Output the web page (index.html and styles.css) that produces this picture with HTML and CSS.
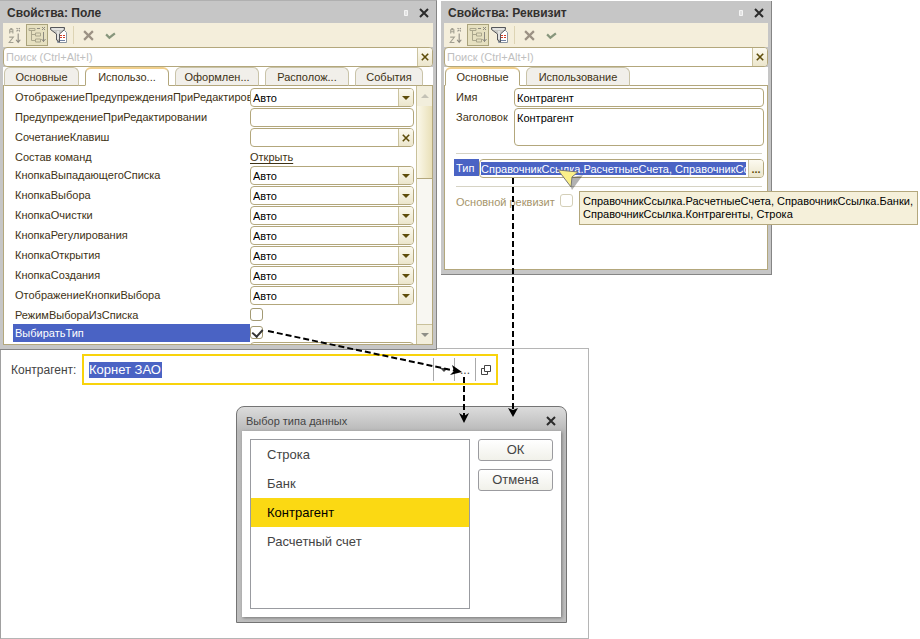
FILE: index.html
```
<!DOCTYPE html>
<html lang="ru">
<head>
    <meta charset="UTF-8">
    <meta name="viewport" content="width=device-width, initial-scale=1.0">
    <title>Выбор типа данных</title>
    <link rel="stylesheet" href="styles.css">
</head>
<body>

    <!-- Shared icons -->
    <svg class="icons" width="0" height="0" aria-hidden="true">
        <symbol id="sort" viewBox="0 0 17 17">
            <path d="M3.500 7V3.500h1v-1h1v1h1V7M3.500 5.500h3M3 10.500h4L3 15.500h4" fill="none" stroke="#a3a092"/>
            <path d="M11.500 7v8M9.500 13l2 2.500 2-2.500M10 2l1 1M13 2l-1 1M10 5l1-1M13 5l-1-1" fill="none" stroke="#8d8a80"/>
        </symbol>
        <symbol id="tree" viewBox="0 0 18 18">
            <path d="M1 2.500h6v2H1zM3.500 4.500v10M3.500 8.500h4M3.500 14.500h4M7.500 7h5v3h-5zM7.500 13h5v3h-5z" fill="none" stroke="#aaa68c"/>
            <path d="M15.500 6v10M13.500 13l2 2.500 2-2.500M9 2.500h3M14 1l3 3M17 1l-3 3" fill="none" stroke="#8d8a80"/>
        </symbol>
        <symbol id="filter" viewBox="0 0 18 18">
            <path d="M7.500 4.500h7l2 2v10h-9z" fill="#fff" stroke="#8a94a0"/>
            <path d="M10 9.500h2M13 9.500h2M10 11.500h2M13 11.500h2" stroke="#d04028"/>
            <path d="M10 14.500h5" stroke="#7080a0"/>
            <path d="M0.500 1.500h14v2L9.500 8v8l-3-2V8L0.500 3.500z" fill="#c8c8c4" stroke="#55565a"/>
            <path d="M2 3h11M8 5v8" stroke="#fff"/>
        </symbol>
        <symbol id="cross" viewBox="0 0 10 10">
            <path d="M1 1l8 8M9 1L1 9" fill="none" stroke="currentColor" stroke-width="2"/>
        </symbol>
        <symbol id="tick" viewBox="0 0 10 10">
            <path d="M1 4l3 3 5-4" fill="none" stroke="currentColor" stroke-width="2"/>
        </symbol>
        <symbol id="down" viewBox="0 0 8 4">
            <path d="M0 0h8L4 4z" fill="currentColor"/>
        </symbol>
        <symbol id="pin" viewBox="0 0 4 6">
            <path d="M0.500 0.500h3v5h-3z" fill="#e2e2e2" stroke="#f4f4f4"/>
        </symbol>
    </svg>

    <div class="desktop">

        <div class="palettes">

            <!-- Field properties -->
            <section class="palette palette-field">
                <header class="title">
                    <h2>Свойства: Поле</h2>
                    <svg class="pin"><use href="#pin"/></svg>
                    <button class="close" aria-label="Закрыть"><svg><use href="#cross"/></svg></button>
                </header>
                <div class="toolbar">
                    <button aria-label="По алфавиту"><svg><use href="#sort"/></svg></button>
                    <button class="pressed" aria-label="По категориям"><svg><use href="#tree"/></svg></button>
                    <button aria-label="Только важные"><svg><use href="#filter"/></svg></button>
                    <span class="split"></span>
                    <button class="small" aria-label="Отменить"><svg><use href="#cross"/></svg></button>
                    <button class="small" aria-label="Применить"><svg><use href="#tick"/></svg></button>
                </div>
                <div class="box search">
                    <input type="text" placeholder="Поиск (Ctrl+Alt+I)" aria-label="Поиск">
                    <button class="box-btn" aria-label="Очистить"><svg class="x"><use href="#cross"/></svg></button>
                </div>
                <nav class="tabs">
                    <button>Основные</button>
                    <button class="active">Использо...</button>
                    <button>Оформлен...</button>
                    <button>Располож...</button>
                    <button>События</button>
                </nav>
                <div class="scroll-area">
                    <div class="rows">
                        <div class="row">
                            <label for="warnMode">ОтображениеПредупрежденияПриРедактировании</label>
                            <div class="box"><select id="warnMode"><option>Авто</option></select><span class="box-btn"><svg class="arrow"><use href="#down"/></svg></span></div>
                        </div>
                        <div class="row">
                            <label for="warnText">ПредупреждениеПриРедактировании</label>
                            <div class="box"><input type="text" id="warnText"></div>
                        </div>
                        <div class="row">
                            <label for="hotkey">СочетаниеКлавиш</label>
                            <div class="box"><input type="text" id="hotkey"><button class="box-btn" aria-label="Очистить"><svg class="x"><use href="#cross"/></svg></button></div>
                        </div>
                        <div class="row short">
                            <span class="name">Состав команд</span>
                            <a href="#commands">Открыть</a>
                        </div>
                        <div class="row">
                            <label for="dropButton">КнопкаВыпадающегоСписка</label>
                            <div class="box"><select id="dropButton"><option>Авто</option></select><span class="box-btn"><svg class="arrow"><use href="#down"/></svg></span></div>
                        </div>
                        <div class="row">
                            <label for="chooseButton">КнопкаВыбора</label>
                            <div class="box"><select id="chooseButton"><option>Авто</option></select><span class="box-btn"><svg class="arrow"><use href="#down"/></svg></span></div>
                        </div>
                        <div class="row">
                            <label for="clearButton">КнопкаОчистки</label>
                            <div class="box"><select id="clearButton"><option>Авто</option></select><span class="box-btn"><svg class="arrow"><use href="#down"/></svg></span></div>
                        </div>
                        <div class="row">
                            <label for="spinButton">КнопкаРегулирования</label>
                            <div class="box"><select id="spinButton"><option>Авто</option></select><span class="box-btn"><svg class="arrow"><use href="#down"/></svg></span></div>
                        </div>
                        <div class="row">
                            <label for="openButton">КнопкаОткрытия</label>
                            <div class="box"><select id="openButton"><option>Авто</option></select><span class="box-btn"><svg class="arrow"><use href="#down"/></svg></span></div>
                        </div>
                        <div class="row">
                            <label for="createButton">КнопкаСоздания</label>
                            <div class="box"><select id="createButton"><option>Авто</option></select><span class="box-btn"><svg class="arrow"><use href="#down"/></svg></span></div>
                        </div>
                        <div class="row">
                            <label for="buttonView">ОтображениеКнопкиВыбора</label>
                            <div class="box"><select id="buttonView"><option>Авто</option></select><span class="box-btn"><svg class="arrow"><use href="#down"/></svg></span></div>
                        </div>
                        <div class="row short">
                            <label for="listMode">РежимВыбораИзСписка</label>
                            <input type="checkbox" id="listMode">
                        </div>
                        <div class="row short selected">
                            <label for="chooseType">ВыбиратьТип</label>
                            <input type="checkbox" id="chooseType" checked>
                        </div>
                        <div class="row">
                            <span class="name"></span>
                            <div class="box"></div>
                        </div>
                    </div>
                    <div class="scrollbar">
                        <span class="scroll-btn up"><svg class="arrow"><use href="#down"/></svg></span>
                        <span class="thumb"></span>
                        <span class="scroll-btn"><svg class="arrow"><use href="#down"/></svg></span>
                    </div>
                </div>
            </section>

            <!-- Attribute properties -->
            <section class="palette palette-attr">
                <header class="title">
                    <h2>Свойства: Реквизит</h2>
                    <svg class="pin"><use href="#pin"/></svg>
                    <button class="close" aria-label="Закрыть"><svg><use href="#cross"/></svg></button>
                </header>
                <div class="toolbar">
                    <button aria-label="По алфавиту"><svg><use href="#sort"/></svg></button>
                    <button class="pressed" aria-label="По категориям"><svg><use href="#tree"/></svg></button>
                    <button aria-label="Только важные"><svg><use href="#filter"/></svg></button>
                    <span class="split"></span>
                    <button class="small" aria-label="Отменить"><svg><use href="#cross"/></svg></button>
                    <button class="small" aria-label="Применить"><svg><use href="#tick"/></svg></button>
                </div>
                <div class="box search">
                    <input type="text" placeholder="Поиск (Ctrl+Alt+I)" aria-label="Поиск">
                    <button class="box-btn" aria-label="Очистить"><svg class="x"><use href="#cross"/></svg></button>
                </div>
                <nav class="tabs">
                    <button class="active">Основные</button>
                    <button class="wide">Использование</button>
                </nav>
                <div class="attr-body">
                    <div class="attr-row">
                        <label for="attrName">Имя</label>
                        <div class="box"><input type="text" id="attrName" value="Контрагент"></div>
                    </div>
                    <div class="attr-row tall">
                        <label for="attrTitle">Заголовок</label>
                        <div class="box"><textarea id="attrTitle">Контрагент</textarea></div>
                    </div>
                    <hr>
                    <div class="attr-row type-row">
                        <label for="attrType">Тип</label>
                        <div class="box">
                            <input type="text" id="attrType" value="СправочникСсылка.РасчетныеСчета, СправочникСсылка.Банки, СправочникСсылка.Контрагенты, Строка">
                            <button class="box-btn dots" aria-label="Выбрать тип">...</button>
                        </div>
                    </div>
                    <hr>
                    <div class="attr-row disabled">
                        <label for="mainAttr">Основной реквизит</label>
                        <input type="checkbox" id="mainAttr" disabled>
                    </div>
                </div>
                <div class="tooltip">СправочникСсылка.РасчетныеСчета, СправочникСсылка.Банки,<br>СправочникСсылка.Контрагенты, Строка</div>
            </section>
        </div>

        <!-- Form with the input field -->
        <section class="form">
            <div class="form-row">
                <label for="partner">Контрагент:</label>
                <div class="entry">
                    <input type="text" id="partner" value="Корнет ЗАО">
                    <button aria-label="Список"><svg class="arrow"><use href="#down"/></svg></button>
                    <button aria-label="Выбрать">...</button>
                    <button aria-label="Открыть">
                        <svg class="open" viewBox="0 0 10 10"><path d="M3.500 0.500h6v6h-6zM3.500 3.500h-3v6h6v-3" fill="none" stroke="#444"/></svg>
                    </button>
                </div>
            </div>

            <!-- Type choice dialog -->
            <div class="dialog" role="dialog" aria-labelledby="dialogTitle">
                <header class="dialog-title">
                    <h2 id="dialogTitle">Выбор типа данных</h2>
                    <button class="close" aria-label="Закрыть"><svg><use href="#cross"/></svg></button>
                </header>
                <div class="dialog-body">
                    <ul role="listbox" aria-labelledby="dialogTitle">
                        <li role="option">Строка</li>
                        <li role="option">Банк</li>
                        <li role="option" class="current" aria-selected="true">Контрагент</li>
                        <li role="option">Расчетный счет</li>
                    </ul>
                    <div class="dialog-buttons">
                        <button>ОК</button>
                        <button>Отмена</button>
                    </div>
                </div>
            </div>
        </section>

        <!-- Arrows and mouse pointer over the windows -->
        <svg class="arrows" viewBox="0 0 920 639" width="920" height="639" aria-hidden="true">
            <g fill="none" stroke="#000" stroke-width="2" stroke-dasharray="6 3">
                <path d="M268 331L456 371"/>
                <path d="M464 377v40"/>
                <path d="M513 178v232"/>
            </g>
            <path d="M462 372l-10-7 2 6-4 4z"/>
            <path d="M464 423l-5-10 5 3 5-3z"/>
            <path d="M513 417l-5-9 5 2 5-2z"/>
            <path d="M567 178l16-3-11 15z" fill="#000" opacity="0.3"/>
            <path d="M558 170l20 2-6 5-1 10z" fill="#fbf08a" stroke="#777"/>
        </svg>
    </div>

</body>
</html>
```
FILE: styles.css
```
* {
    box-sizing: border-box;
}

body {
    margin: 0;
    background: #fff;
    color: #3e3214;
    font: 11px/14px "Liberation Sans", Arial, sans-serif;
}

button, input, select, textarea {
    margin: 0;
    padding: 0;
    border: none;
    background: none;
    font: inherit;
    color: inherit;
    outline: none;
}

h2 {
    margin: 0;
    flex: 1;
}

.icons {
    position: absolute;
}

.desktop {
    position: relative;
}

.palettes {
    display: flex;
    align-items: flex-start;
    gap: 4px;
}

/* Property palettes */
.palette {
    position: relative;
    z-index: 1;
    display: flex;
    flex-direction: column;
    padding: 0 3px 4px;
    background: #c6c6c6;
    border-right: 1px solid #858585;
    border-bottom: 1px solid #858585;
}

.palette-field {
    width: 437px;
    height: 350px;
    border-top: 1px solid #b0b0b0;
}

.palette-attr {
    width: 331px;
    height: 274px;
    margin-top: 1px;
}

.title {
    display: flex;
    align-items: center;
    height: 22px;
    padding: 2px 4px 0;
    color: #33302e;
}

.title h2 {
    font-size: 12px;
    line-height: 16px;
}

.pin {
    width: 4px;
    height: 6px;
    margin-right: 11px;
}

.close {
    display: flex;
    color: #2b2b2b;
}

.close svg {
    width: 10px;
    height: 10px;
}

.toolbar {
    display: flex;
    align-items: center;
    height: 24px;
    padding: 0 1px;
    background: #f4eedb;
}

.toolbar button {
    display: flex;
    align-items: center;
    justify-content: center;
    width: 22px;
    height: 22px;
}

.toolbar svg {
    width: 18px;
    height: 18px;
}

.toolbar .pressed {
    background: #e6e0c0;
    border: 1px solid #aaa37c;
}

.toolbar .small {
    color: #9b9184;
}

.toolbar .small + .small {
    color: #87967c;
}

.toolbar .small svg {
    width: 11px;
    height: 11px;
}

.split {
    width: 1px;
    height: 18px;
    margin: 0 3px;
    background: #ddd4b4;
}

.box {
    display: flex;
    flex: 1;
    height: 19px;
    min-width: 0;
    background: #fff;
    border: 1px solid #b3a77c;
    border-radius: 4px;
    overflow: hidden;
    color: #000;
}

.box input, .box select, .box textarea {
    flex: 1;
    min-width: 0;
    padding: 0 2px;
    appearance: none;
    resize: none;
}

.box-btn {
    display: flex;
    align-items: center;
    justify-content: center;
    width: 15px;
    background: linear-gradient(#fcfaf0, #ece6cc);
    border-left: 1px solid #cbc39f;
    color: #5e4d0a;
}

.arrow {
    width: 8px;
    height: 4px;
}

.x {
    width: 8px;
    height: 8px;
}

.search {
    flex: none;
    height: 20px;
}

.search input::placeholder {
    color: #c0c0c0;
}

.tabs {
    display: flex;
    gap: 6px;
    height: 19px;
    padding: 0 1px;
    background: #fff;
    border-bottom: 1px solid #b3a77c;
}

.tabs button {
    width: 84px;
    height: 19px;
    background: #f1efea;
    border: 1px solid #c9c3a8;
    border-bottom-color: #b3a77c;
    border-radius: 6px 6px 0 0;
}

.tabs button:first-child {
    width: 75px;
}

.tabs button:nth-child(5) {
    width: 68px;
}

.tabs .wide {
    width: 104px;
}

.tabs .active {
    background: #fff;
    border-color: #b3a77c;
    border-top: 2px solid #f0cf8c;
    border-bottom: 1px solid #fff;
}

.scroll-area {
    display: flex;
    flex: 1;
    min-height: 0;
    background: #fff;
    border: 1px solid #b3a77c;
    border-top: none;
}

.rows {
    flex: 1;
    min-width: 0;
    padding: 2px 2px 0 9px;
    overflow: hidden;
}

.row {
    display: flex;
    height: 20px;
}

.row label, .row .name {
    flex: none;
    width: 237px;
    padding: 2px 2px;
    overflow: hidden;
    white-space: nowrap;
}

.row a {
    padding-top: 2px;
    color: inherit;
    text-underline-offset: 2px;
}

.row.short {
    height: 18px;
}

.row.selected label {
    background: #4a63c4;
    color: #fff;
}

input[type="checkbox"] {
    appearance: none;
    width: 13px;
    height: 13px;
    margin-top: 2px;
    background: #fff;
    border: 1px solid #a39a74;
    border-radius: 3px;
}

input[type="checkbox"]:checked::after {
    content: "";
    display: block;
    width: 5px;
    height: 8px;
    margin-left: 3px;
    border: solid #333;
    border-width: 0 2px 2px 0;
    transform: rotate(42deg);
}

.scrollbar {
    display: flex;
    flex-direction: column;
    width: 16px;
    background: #f8f7f2;
    border-left: 1px solid #c9c19b;
}

.scroll-btn {
    display: flex;
    align-items: center;
    justify-content: center;
    height: 20px;
    background: #f2eedc;
    border-top: 1px solid #c9c19b;
    color: #8e8e86;
}

.scroll-btn.up {
    border-top: none;
    color: #c4c2b6;
}

.scroll-btn.up svg {
    transform: rotate(180deg);
}

.scroll-btn svg {
    height: 6px;
}

.thumb {
    height: 73px;
    margin-bottom: auto;
    background: linear-gradient(90deg, #fbf8ea, #e9e0b8);
    border-bottom: 1px solid #b3a77c;
}

.attr-body {
    flex: 1;
    padding: 2px 3px 0 11px;
    background: #fff;
    border: 1px solid #b3a77c;
    border-top: none;
}

.attr-row {
    display: flex;
    height: 20px;
}

.attr-row label {
    width: 58px;
    padding-top: 2px;
}

.attr-row.tall {
    height: 38px;
}

.attr-row.tall .box {
    height: 38px;
}

.box textarea {
    padding-top: 2px;
}

.attr-body hr {
    height: 1px;
    margin: 7px 2px 5px 0;
    background: #d6d3c4;
    border: none;
}

.attr-row.type-row label {
    width: 25px;
    height: 17px;
    margin-left: -2px;
    padding-left: 2px;
    background: #4a63c4;
    color: #fff;
}

.type-row .box {
    padding-left: 1px;
}

.type-row .box input {
    height: 13px;
    margin: 2px 2px 0 0;
    padding: 0;
    background: #4a63c4;
    color: #fff;
}

.dots {
    font-weight: bold;
}

.attr-row.disabled {
    color: #a5946a;
}

.attr-row.disabled label {
    width: 104px;
    padding-top: 3px;
}

.attr-row.disabled input {
    border-color: #d4cfb8;
}

.tooltip {
    position: absolute;
    left: 138px;
    top: 190px;
    padding: 3px 4px 3px 3px;
    background: #f5f0da;
    border: 1px solid #b3a77c;
    color: #000;
    line-height: 13px;
    white-space: nowrap;
}

/* Form */
.form {
    position: relative;
    width: 589px;
    height: 291px;
    margin-top: -2px;
    padding: 5px 0 0 10px;
    border: 1px solid #b5b5b5;
    border-left-color: #a0a0a0;
    color: #444;
    font-size: 12px;
}

.form-row {
    display: flex;
    align-items: center;
}

.form-row label {
    width: 71px;
}

.entry {
    display: flex;
    align-items: center;
    width: 416px;
    height: 31px;
    padding-left: 5px;
    border: 2px solid #f8d30c;
}

.entry input {
    width: 73px;
    height: 16px;
    margin-right: auto;
    background: #4a63c4;
    color: #fff;
    font-size: 13px;
}

.entry button {
    display: flex;
    align-items: center;
    justify-content: center;
    width: 21px;
    height: 23px;
    border-left: 1px solid #aaa;
}

.open {
    width: 10px;
    height: 10px;
}

/* Dialog */
.dialog {
    position: absolute;
    left: 235px;
    top: 57px;
    width: 331px;
    padding: 0 5px 5px;
    background: linear-gradient(#dcdcdc, #b9b9b9 24px, #bebebe);
    border: 1px solid #747474;
    border-radius: 8px 8px 0 0;
}

.dialog-title {
    display: flex;
    align-items: center;
    height: 24px;
    padding: 4px 5px 0 4px;
}

.dialog-title h2 {
    font-size: 11px;
    font-weight: normal;
}

.dialog-body {
    display: flex;
    gap: 8px;
    padding: 8px;
    background: #fff;
    box-shadow: 1px 1px 3px #777;
    font-size: 13px;
}

.dialog-body ul {
    width: 220px;
    height: 170px;
    margin: 0;
    padding: 0;
    border: 1px solid #999ba0;
    list-style: none;
}

.dialog-body li {
    height: 29px;
    padding-left: 16px;
    line-height: 29px;
}

.dialog-body .current {
    background: #fbd913;
    color: #000;
}

.dialog-buttons {
    display: flex;
    flex-direction: column;
    gap: 8px;
    width: 75px;
}

.dialog-buttons button {
    height: 22px;
    background: linear-gradient(#fff, #f1f1ea);
    border: 1px solid #9b9b9f;
    border-radius: 3px;
}

/* Arrows */
.arrows {
    position: absolute;
    left: 0;
    top: 0;
    z-index: 2;
    pointer-events: none;
}
```
